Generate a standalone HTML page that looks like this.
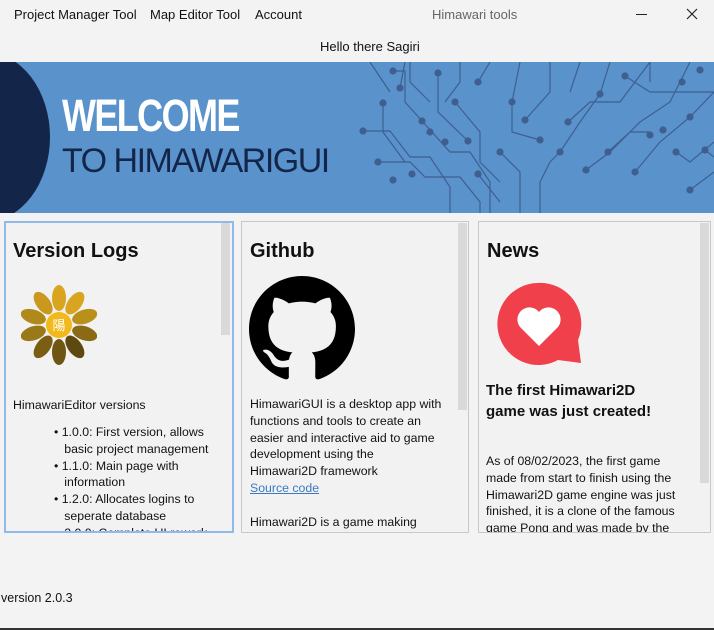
<!DOCTYPE html>
<html><head><style>
*{margin:0;padding:0;box-sizing:border-box}
body{width:714px;height:630px;background:#f3f3f3;font-family:"Liberation Sans","Noto Sans CJK JP",sans-serif;color:#111;position:relative;overflow:hidden}
.a{position:absolute;white-space:nowrap}
.menu{font-size:13px;top:7px}
.card{position:absolute;top:221px;height:312px;background:#f2f2f2;border:1px solid #c8c8c8;overflow:hidden}
.sb{position:absolute;right:1px;top:1px;width:9px;background:#d9d9d9}
.card h2{position:absolute;left:8px;top:18px;font-size:20px;font-weight:bold}
.t{position:absolute;font-size:12.3px;line-height:16.8px;white-space:nowrap}
</style></head><body>
<div class="a" style="left:0;top:0;width:714px;height:62px;background:#f3f3f3"></div>
<div class="a menu" style="left:14px">Project Manager Tool</div>
<div class="a menu" style="left:150px">Map Editor Tool</div>
<div class="a menu" style="left:255px">Account</div>
<div class="a menu" style="left:432px;color:#666">Himawari tools</div>
<div class="a" style="left:636px;top:14px;width:11px;height:1px;background:#222"></div>
<svg class="a" style="left:686px;top:8px" width="12" height="12"><path d="M1 1L11 11M11 1L1 11" stroke="#222" stroke-width="1.2"/></svg>
<div class="a" style="left:320px;top:39px;font-size:13px">Hello there Sagiri</div>

<div class="a" style="left:0;top:62px;width:714px;height:151px;background:#5a92cc;overflow:hidden">
 <div style="position:absolute;left:-80px;top:-10px;width:130px;height:170px;border-radius:50%;background:#13264a"></div>
 <div style="position:absolute;left:62px;top:30px;font-size:45px;font-weight:bold;color:#fff;letter-spacing:-2px;transform:scaleX(0.8);transform-origin:left;line-height:48px">WELCOME</div>
 <div style="position:absolute;left:62px;top:80px;font-size:34px;color:#13264a;letter-spacing:-1.5px;line-height:38px">TO HIMAWARIGUI</div>
 <svg style="position:absolute;left:350px;top:0" width="364" height="151" fill="none" stroke="#3f5f8f" stroke-width="1.2">
  <g fill="#3f5f8f">
  <circle cx="13" cy="69" r="3"/><circle cx="28" cy="100" r="3"/><circle cx="33" cy="41" r="3"/><circle cx="43" cy="9" r="3"/><circle cx="50" cy="26" r="3"/><circle cx="43" cy="118" r="3"/><circle cx="62" cy="112" r="3"/><circle cx="72" cy="59" r="3"/><circle cx="88" cy="11" r="3"/><circle cx="80" cy="70" r="3"/><circle cx="95" cy="80" r="3"/><circle cx="105" cy="40" r="3"/><circle cx="118" cy="79" r="3"/><circle cx="128" cy="20" r="3"/><circle cx="128" cy="112" r="3"/><circle cx="150" cy="90" r="3"/><circle cx="162" cy="40" r="3"/><circle cx="175" cy="58" r="3"/><circle cx="190" cy="78" r="3"/><circle cx="210" cy="90" r="3"/><circle cx="218" cy="60" r="3"/><circle cx="236" cy="108" r="3"/><circle cx="250" cy="32" r="3"/><circle cx="258" cy="90" r="3"/><circle cx="275" cy="14" r="3"/><circle cx="285" cy="110" r="3"/><circle cx="300" cy="73" r="3"/><circle cx="313" cy="68" r="3"/><circle cx="326" cy="90" r="3"/><circle cx="332" cy="20" r="3"/><circle cx="340" cy="128" r="3"/><circle cx="350" cy="8" r="3"/><circle cx="355" cy="88" r="3"/><circle cx="340" cy="55" r="3"/>
  </g>
  <path d="M13 69H40L60 95H80L100 125V151M28 100H60L75 115H110L130 140V151M33 41V70L55 100M43 9H55V40L72 59M50 26L55 0M72 59L100 90H120L140 120V151M88 11V50L118 79M105 40L130 70V100L150 120M128 20L140 0M128 112L150 140M150 90L170 110V151M162 40L170 0M162 40V70L190 78M175 58L200 30V0M210 90L230 60L250 32L260 0M218 60L240 40H270L300 0M236 108L260 90L290 60L320 40L340 0M258 90L280 70H300M285 110L310 80L340 55L364 30M326 90L340 100L364 80M340 128L364 110M275 14L300 30H364M355 88L364 95M190 151V120L200 100L210 90M60 0V20L80 40M110 0V20L95 40M230 0L220 30M300 0V20M20 0L40 30"/>
 </svg>
</div>

<div class="card" style="left:4px;width:230px;border:2px solid #90bbe8">
 <div class="sb" style="height:112px;top:0;right:2px"></div>
 <h2 style="left:7px;top:17px">Version Logs</h2>
 <svg style="position:absolute;left:15px;top:60px" width="76" height="90" viewBox="0 0 76 90">
  <g transform="translate(38,42)">
   <ellipse rx="7" ry="13" transform="rotate(0) translate(0,-27)" fill="#d9a521"/>
   <ellipse rx="7" ry="13" transform="rotate(36) translate(0,-27)" fill="#d9a521"/>
   <ellipse rx="7" ry="13" transform="rotate(72) translate(0,-27)" fill="#b8901a"/>
   <ellipse rx="7" ry="13" transform="rotate(108) translate(0,-27)" fill="#8a6a15"/>
   <ellipse rx="7" ry="13" transform="rotate(144) translate(0,-27)" fill="#5e4a10"/>
   <ellipse rx="7" ry="13" transform="rotate(180) translate(0,-27)" fill="#6e5512"/>
   <ellipse rx="7" ry="13" transform="rotate(216) translate(0,-27)" fill="#7a5f12"/>
   <ellipse rx="7" ry="13" transform="rotate(252) translate(0,-27)" fill="#9a7a18"/>
   <ellipse rx="7" ry="13" transform="rotate(288) translate(0,-27)" fill="#b0891a"/>
   <ellipse rx="7" ry="13" transform="rotate(324) translate(0,-27)" fill="#c9981c"/>
   <circle r="13" fill="#f2b91c"/>
   <text x="0" y="5" font-size="13" text-anchor="middle" fill="#fff" font-family="Noto Sans CJK JP,sans-serif">陽</text>
  </g>
 </svg>
 <div class="t" style="left:7px;top:174px">HimawariEditor versions</div>
 <div class="t" style="left:48px;top:201px">• 1.0.0: First version, allows<br>&nbsp;&nbsp;&nbsp;basic project management<br>• 1.1.0: Main page with<br>&nbsp;&nbsp;&nbsp;information<br>• 1.2.0: Allocates logins to<br>&nbsp;&nbsp;&nbsp;seperate database<br>&nbsp;&nbsp;&nbsp;2.0.0: Complete UI rework</div>
</div>

<div class="card" style="left:241px;width:228px">
 <div class="sb" style="height:187px"></div>
 <h2>Github</h2>
 <svg style="position:absolute;left:7px;top:54px" width="106" height="106" viewBox="0 0 16 16"><path fill="#000" d="M8 0C3.580 0 0 3.580 0 8c0 3.540 2.290 6.530 5.470 7.590.4.070.550-.170.550-.380 0-.190-.010-.820-.010-1.490-2.010.370-2.530-.490-2.690-.940-.090-.230-.480-.940-.820-1.130-.280-.150-.680-.520-.010-.530.630-.010 1.080.580 1.230.820.720 1.210 1.870.870 2.330.660.070-.520.280-.870.510-1.070-1.780-.2-3.640-.890-3.640-3.950 0-.870.310-1.590.820-2.150-.080-.2-.360-1.020.080-2.120 0 0 .670-.210 2.200.820.640-.180 1.320-.270 2-.270.680 0 1.360.090 2 .270 1.530-1.040 2.200-.820 2.200-.820.440 1.100.160 1.920.080 2.120.510.560.820 1.270.820 2.150 0 3.070-1.870 3.750-3.650 3.950.290.250.540.730.540 1.480 0 1.070-.010 1.930-.010 2.200 0 .210.150.460.550.380A8.013 8.013 0 0016 8c0-4.420-3.580-8-8-8z"/></svg>
 <div class="t" style="left:8px;top:174px">HimawariGUI is a desktop app with<br>functions and tools to create an<br>easier and interactive aid to game<br>development using the<br>Himawari2D framework<br><span style="color:#3a7ac0;text-decoration:underline">Source code</span><br><br>Himawari2D is a game making</div>
</div>

<div class="card" style="left:478px;width:233px">
 <div class="sb" style="height:260px"></div>
 <h2>News</h2>
 <svg style="position:absolute;left:17px;top:60px" width="86" height="84" viewBox="0 0 86 84"><path d="M42 1A41 41 0 1 0 62 78L85 81L82 58A41 41 0 0 0 42 1Z" fill="#f0404c"/><path d="M43 64L24 45A11 11 0 0 1 43 30A11 11 0 0 1 62 45Z" fill="#fff"/></svg>
 <div class="t" style="left:7px;top:158px;font-size:15px;line-height:21px;font-weight:bold">The first Himawari2D<br>game was just created!</div>
 <div class="t" style="left:7px;top:231px">As of 08/02/2023, the first game<br>made from start to finish using the<br>Himawari2D game engine was just<br>finished, it is a clone of the famous<br>game Pong and was made by the</div>
</div>

<div class="a" style="left:1px;top:591px;font-size:12.5px">version 2.0.3</div>
<div class="a" style="left:0;top:628px;width:714px;height:2px;background:#333"></div>
</body></html>
